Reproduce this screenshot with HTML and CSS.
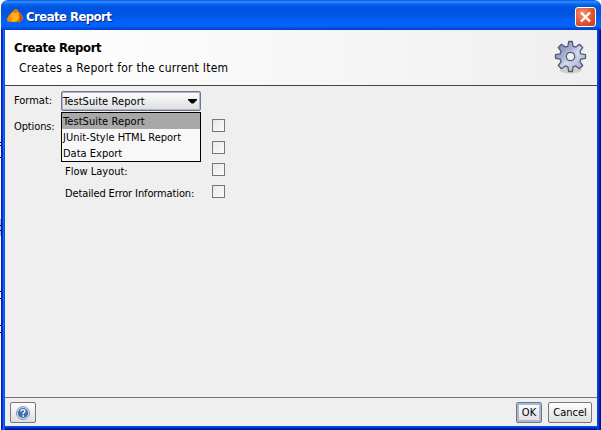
FILE: index.html
```html
<!DOCTYPE html>
<html lang="en">
<head>
<meta charset="utf-8">
<title>Create Report</title>
<link rel="stylesheet" href="styles.css">
</head>
<body>
<div class="desktop">
<div class="window">
  <div class="titlebar">
    <svg class="app-icon" width="17" height="15" viewBox="0 0 17 15">
      <path d="M0 11Q2 6 5 4L8 1H10L12 4Q16 7 16 11L13 14H3L0 13Z" fill="#ef7404"/>
      <path d="M5 4Q8 6 11 4L12 10Q10 14 6 14Q3 12 5 4Z" fill="#ffb51b"/>
      <path d="M0 12Q3 5 5 5Q3 9 5 14H3Z" fill="#ff8a00"/>
      <path d="M12 5Q16 8 15 12L12 14Q14 9 12 5Z" fill="#c94b10"/>
    </svg>
    <span class="title">Create Report</span>
    <button class="close" aria-label="Close"><svg width="19" height="18" viewBox="0 0 19 18"><path d="M5 4.5L14 13.5M14 4.5L5 13.5" stroke="#fff" stroke-width="2.3"/></svg></button>
  </div>
  <div class="content">
    <header class="header">
      <div>
        <h1>Create Report</h1>
        <p>Creates a Report for the current Item</p>
      </div>
      <svg class="gear" width="33" height="35" viewBox="-16.5 -16.5 33 35">
        <defs>
          <linearGradient id="metal" x1="0" y1="0" x2="1" y2="1">
            <stop offset="0" stop-color="#7480a8"/><stop offset=".38" stop-color="#a3b0d4"/>
            <stop offset=".55" stop-color="#d3dcee"/><stop offset="1" stop-color="#8f9bc4"/>
          </linearGradient>
        </defs>
        <ellipse cx="0" cy="13.5" rx="11" ry="3.5" fill="#b9b9b9" opacity=".6"/>
        <path d="M-1.8-15H1.8L2.6-10.4L5.2-9.4L9-12.2L12.2-9L9.4-5.2L10.4-2.6L15-1.8V1.8L10.4 2.6L9.4 5.2L12.2 9L9 12.2L5.2 9.4L2.6 10.4L1.8 15H-1.8L-2.6 10.4L-5.2 9.4L-9 12.2L-12.2 9L-9.4 5.2L-10.4 2.6L-15 1.8V-1.8L-10.4-2.6L-9.4-5.2L-12.2-9L-9-12.2L-5.2-9.4L-2.6-10.4Z" fill="url(#metal)" stroke="#535a76" stroke-width="1.3" stroke-linejoin="round"/>
        <circle r="5.6" fill="none" stroke="#bcc5df" stroke-width="1"/>
        <circle r="4.2" fill="#f0f0f0" stroke="#535a76" stroke-width="1.3"/>
      </svg>
    </header>
    <main class="form">
      <div class="labels">
        <span class="t-format">Format:</span>
        <span class="t-options">Options:</span>
      </div>
      <div class="fields">
        <div class="combo"><span class="t-suite">TestSuite Report</span>
          <svg width="9" height="5" viewBox="0 0 9 5"><path d="M0 0H9V1L5.5 4.5H3.5L0 1Z"/></svg>
          <ul class="popup">
            <li class="selected"><span class="t-suite">TestSuite Report</span></li>
            <li><span>JUnit-Style HTML Report</span></li>
            <li><span>Data Export</span></li>
          </ul>
        </div>
        <div class="option"><span></span><i class="check"></i></div>
        <div class="option"><span></span><i class="check"></i></div>
        <div class="option"><span>Flow Layout:</span><i class="check"></i></div>
        <div class="option"><span class="t-detail">Detailed Error Information:</span><i class="check"></i></div>
      </div>
    </main>
    <footer class="footer">
      <button class="btn help" aria-label="Help">
        <svg width="14" height="14" viewBox="0 0 14 14">
          <circle cx="7" cy="7" r="6.4" fill="#d5e2f1" stroke="#7796bd"/>
          <circle cx="7" cy="7" r="5.1" fill="#3f6ea8"/>
          <path d="M5 5.4Q5 3.6 7 3.6T9 5.3Q9 6.3 7.2 7.2V8.3" fill="none" stroke="#fff" stroke-width="1.3"/>
          <path d="M6.4 9.3H8V10.8H6.4Z" fill="#fff"/>
        </svg>
      </button>
      <button class="btn ok"><span>OK</span></button>
      <button class="btn cancel"><span>Cancel</span></button>
    </footer>
  </div>
</div>
</div>
</body>
</html>
```
FILE: styles.css
```css
* { box-sizing: border-box; }
body {
  margin: 0;
  width: 601px;
  height: 430px;
  overflow: hidden;
  font: 11px/16px "DejaVu Sans Condensed", "DejaVu Sans", sans-serif;
  font-stretch: condensed;
  color: #000;
}
.desktop {
  height: 430px;
  padding-left: 1px;
  background:
    linear-gradient(#000, #000) 0 142px / 1px 1px no-repeat,
    linear-gradient(#000, #000) 0 145px / 1px 1px no-repeat,
    linear-gradient(#000, #000) 0 157px / 1px 1px no-repeat,
    linear-gradient(#000, #000) 0 225px / 1px 1px no-repeat,
    linear-gradient(#000, #000) 0 230px / 1px 1px no-repeat,
    linear-gradient(#000, #000) 0 291px / 1px 1px no-repeat,
    linear-gradient(#000, #000) 0 298px / 1px 1px no-repeat,
    linear-gradient(#000, #000) 0 325px / 1px 1px no-repeat,
    linear-gradient(#000, #000) 0 332px / 1px 1px no-repeat,
    linear-gradient(#9cbdec, #9cbdec) 0 219px / 1px 17px no-repeat,
    #fff;
}
.window {
  height: 430px;
  display: flex;
  flex-direction: column;
  padding: 0 4px 4px;
  border-radius: 7px 7px 0 0;
  background:
    linear-gradient(90deg, #0019cf 0 1px, #0831d9 1px 2px, #166aee 2px 3px, #0855dd 3px 4px) 0 0 / 4px 100% no-repeat,
    linear-gradient(90deg, #0046e0 0 1px, #003bda 1px 2px, #001ea0 2px 3px, #00138c 3px 4px) 100% 0 / 4px 100% no-repeat,
    linear-gradient(#0050e8 0 1px, #003bda 1px 2px, #001ea0 2px 3px, #00138c 3px 4px) 0 100% / 100% 4px no-repeat;
}
.titlebar {
  height: 30px;
  flex: none;
  display: flex;
  align-items: center;
  margin: 0 -4px;
  padding: 3px 5px 0 6px;
  border-radius: 7px 7px 0 0;
  background: linear-gradient(#0058e0 0, #3a91ff 2px, #1273f5 3px, #0058e6 6px, #0053e1 9px, #0055e5 15px, #0362fb 22px, #0463fc 26px, #0050df 28px, #003dd7 30px);
}
.app-icon { margin-top: -2px; }
.title {
  margin-left: 2px;
  font: bold 13px/20px "DejaVu Sans Condensed", "DejaVu Sans", sans-serif;
  letter-spacing: -.55px;
  color: #fff;
  text-shadow: 1px 1px #06207d;
}
.close {
  display: block;
  width: 21px;
  height: 20px;
  margin-left: auto;
  padding: 0;
  border: 1px solid #fff;
  border-radius: 3px;
  background: radial-gradient(circle at 35% 30%, #ee9274, #e15431 55%, #c53a17);
}
.close svg { display: block; }
.content {
  flex: 1;
  display: flex;
  flex-direction: column;
  background: #efefef;
}
.header {
  height: 56px;
  display: flex;
  justify-content: space-between;
  padding: 9px 10px 0 9px;
  border-bottom: 1px solid #444;
  background: linear-gradient(90deg, #fff, #efefef);
}
.header h1 {
  margin: 0;
  font-size: 13px;
  line-height: 17px;
  letter-spacing: -.4px;
}
.header p {
  margin: 4px 0 0 5px;
  font-size: 12px;
  line-height: 17px;
  letter-spacing: .24px;
  white-space: nowrap;
}
.gear { margin-top: 1px; }
.form {
  flex: 1;
  display: flex;
  padding: 5px 0 0 9px;
  white-space: nowrap;
}
.labels {
  width: 47px;
  display: flex;
  flex-direction: column;
  gap: 10px;
  padding-top: 2px;
}
.t-options { letter-spacing: -.12px; }
.t-suite { letter-spacing: .08px; }
.t-detail { letter-spacing: -.12px; }
.combo {
  position: relative;
  width: 140px;
  height: 20px;
  display: flex;
  align-items: center;
  justify-content: space-between;
  margin-bottom: 8px;
  padding: 1px 3px 0 1px;
  border: 1px solid #777;
  border-radius: 2px;
  box-shadow: inset 0 0 0 1px #a3b8dc;
  background: linear-gradient(#fdfdfd, #dedede);
}
.popup {
  position: absolute;
  left: -1px;
  top: 20px;
  width: 140px;
  margin: 0;
  padding: 0;
  border: 1px solid #000;
  background: #f8f8f8;
  list-style: none;
}
.popup li { height: 16px; padding-left: 1px; line-height: 18px; }
.popup .selected { background: #a8a8a8; }
.fields { display: flex; flex-direction: column; }
.option {
  height: 22px;
  display: flex;
  align-items: flex-start;
  padding-left: 4px;
}
.option span { width: 147px; line-height: 18px; }
.check {
  width: 13px;
  height: 13px;
  border: 1px solid #777;
  background: linear-gradient(135deg, #e8e8e8, #fbfbfb);
}
.footer {
  height: 29px;
  display: flex;
  padding: 4px 5px 0;
  border-top: 1px solid #777;
}
.btn {
  height: 21px;
  display: flex;
  align-items: center;
  justify-content: center;
  padding: 0;
  border: 1px solid #777;
  border-radius: 2px;
  font: inherit;
  font-stretch: condensed;
  color: #000;
  background: linear-gradient(#fff, #dedede);
}
.help { width: 26px; margin-right: auto; }
.ok { width: 26px; margin-right: 6px; box-shadow: inset 0 0 0 2px #a3b8dc; }
.cancel { width: 44px; }
```
